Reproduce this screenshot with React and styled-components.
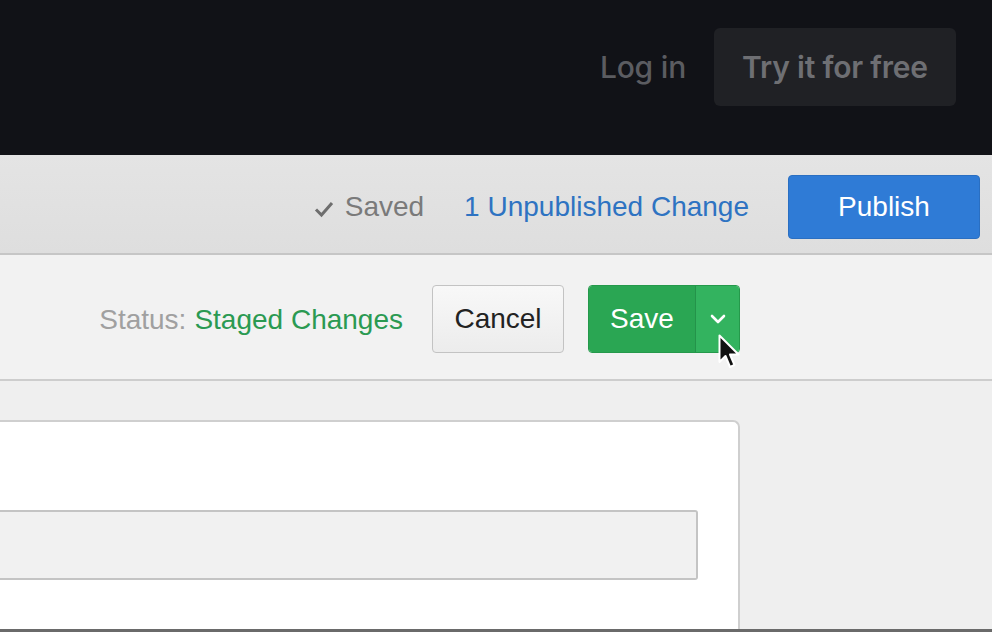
import React from 'react';
import styled, { createGlobalStyle } from 'styled-components';

const GlobalStyle = createGlobalStyle`
	html, body {
		margin: 0;
		padding: 0;
		height: 100%;
		overflow: hidden;
		background: #eeeeee;
	}
	#root {
		height: 100%;
	}
`;

const Page = styled.div`
	height: 632px;
	display: flex;
	flex-direction: column;
	font-family: 'Liberation Sans', Arial, sans-serif;
	border-bottom: 3px solid #6a6a6a;
	box-sizing: border-box;
	overflow: hidden;
`;

const TopBar = styled.div`
	height: 155px;
	flex-shrink: 0;
	background: #111217;
	display: flex;
	align-items: center;
	justify-content: flex-end;
	padding: 0 36px 22px 0;
	gap: 28px;
	font-family: Inter, 'Noto Sans', sans-serif;
	box-sizing: border-box;
`;

const LoginLink = styled.a`
	color: #5b5c61;
	font-size: 30px;
	font-weight: 500;
	letter-spacing: -0.2px;
	text-decoration: none;
`;

const TrialButton = styled.button`
	width: 242px;
	height: 78px;
	border: none;
	border-radius: 6px;
	background: #202125;
	color: #6e6f73;
	font-family: inherit;
	font-size: 30px;
	font-weight: 600;
	letter-spacing: -0.2px;
`;

const PublishBar = styled.div`
	height: 100px;
	flex-shrink: 0;
	background: linear-gradient(#e4e4e4, #dedede);
	border-bottom: 2px solid #c6c6c6;
	display: flex;
	align-items: center;
	justify-content: flex-end;
	padding: 6px 12px 0 0;
	box-sizing: border-box;
`;

const SavedLabel = styled.span`
	display: flex;
	align-items: center;
	gap: 11px;
	color: #7a7a7a;
	font-size: 28px;
	margin-right: 40px;
	svg {
		margin-top: 3px;
	}
`;

const ChangesLink = styled.a`
	color: #2e73c2;
	font-size: 28px;
	text-decoration: none;
	margin-right: 39px;
`;

const Button = styled.button`
	height: ${(p) => p.$h || 68}px;
	width: ${(p) => p.$w}px;
	border-radius: 4px;
	font-family: inherit;
	font-size: 28px;
	padding: 0;
	box-sizing: border-box;
`;

const PublishButton = styled(Button)`
	background: #2f7bd6;
	border: 1px solid #2a6fc2;
	color: #ffffff;
`;

const StatusBar = styled.div`
	height: 126px;
	flex-shrink: 0;
	background: #f2f2f2;
	border-bottom: 2px solid #cdcdcd;
	box-shadow: 0 2px 2px rgba(0, 0, 0, 0.05);
	display: flex;
	align-items: center;
	justify-content: flex-end;
	padding: 4px 252px 0 0;
	box-sizing: border-box;
`;

const Status = styled.span`
	font-size: 28px;
	color: #a0a0a0;
	margin-right: 29px;
	margin-top: 2px;
	b {
		font-weight: normal;
		color: #2b9a52;
		margin-left: 8px;
	}
`;

const CancelButton = styled(Button)`
	background: linear-gradient(#f8f8f8, #ececec);
	border: 1px solid #c3c3c3;
	color: #222222;
	margin-right: 24px;
`;

const SplitButton = styled.div`
	position: relative;
	display: flex;
	height: 68px;
	border-radius: 4px;
	border: 1px solid #25994b;
	box-sizing: border-box;
`;

const SaveMain = styled.button`
	width: 107px;
	border: none;
	border-radius: 3px 0 0 3px;
	background: #2aa653;
	color: #ffffff;
	font-family: inherit;
	font-size: 28px;
	padding: 0;
	border-right: 1px solid #24934a;
`;

const SaveToggle = styled.button`
	width: 43px;
	border: none;
	border-radius: 0 3px 3px 0;
	background: #33b35f;
	display: flex;
	align-items: center;
	justify-content: center;
	padding: 0;
`;

const Cursor = styled.svg`
	position: absolute;
	left: 129px;
	top: 48px;
	pointer-events: none;
`;

const Content = styled.div`
	flex: 1;
	padding-top: 39px;
	background: #efefef;
`;

const Card = styled.div`
	width: 740px;
	height: 100%;
	box-sizing: border-box;
	background: #ffffff;
	border: 2px solid #cfcfcf;
	border-left: none;
	border-bottom: none;
	border-radius: 0 7px 0 0;
	padding: 88px 40px 0 0;
`;

const Field = styled.div`
	height: 70px;
	background: #f1f1f1;
	border: 2px solid #c4c4c4;
	border-left: none;
	border-radius: 0 3px 3px 0;
	box-sizing: border-box;
`;

const Check = () => (
	<svg width='20' height='18' viewBox='0 0 20 18'>
		<path d='M2 9.5 L7.5 15 L18 3' fill='none' stroke='#6e6e6e' strokeWidth='3' />
	</svg>
);

const Chevron = () => (
	<svg width='16' height='10' viewBox='0 0 16 10'>
		<path d='M2 2 L8 8 L14 2' fill='none' stroke='#ffffff' strokeWidth='2.6' strokeLinecap='round' strokeLinejoin='round' />
	</svg>
);

const App = () => {
	return (
		<Page>
			<GlobalStyle />
			<TopBar>
				<LoginLink href='#'>Log in</LoginLink>
				<TrialButton>Try it for free</TrialButton>
			</TopBar>
			<PublishBar>
				<SavedLabel>
					<Check />
					Saved
				</SavedLabel>
				<ChangesLink href='#'>1 Unpublished Change</ChangesLink>
				<PublishButton $w={192} $h={64}>
					Publish
				</PublishButton>
			</PublishBar>
			<StatusBar>
				<Status>
					Status:<b>Staged Changes</b>
				</Status>
				<CancelButton $w={132}>Cancel</CancelButton>
				<SplitButton>
					<SaveMain>Save</SaveMain>
					<SaveToggle>
						<Chevron />
					</SaveToggle>
					<Cursor width='24' height='38' viewBox='0 0 24 38'>
						<path
							d='M1.5 1.5 L1.5 28 L7.5 22 L12 33 L16.5 31 L12 20.5 L20.5 20.5 Z'
							fill='#111111'
							stroke='#ffffff'
							strokeWidth='2'
							strokeLinejoin='round'
						/>
					</Cursor>
				</SplitButton>
			</StatusBar>
			<Content>
				<Card>
					<Field />
				</Card>
			</Content>
		</Page>
	);
};

export default App;
